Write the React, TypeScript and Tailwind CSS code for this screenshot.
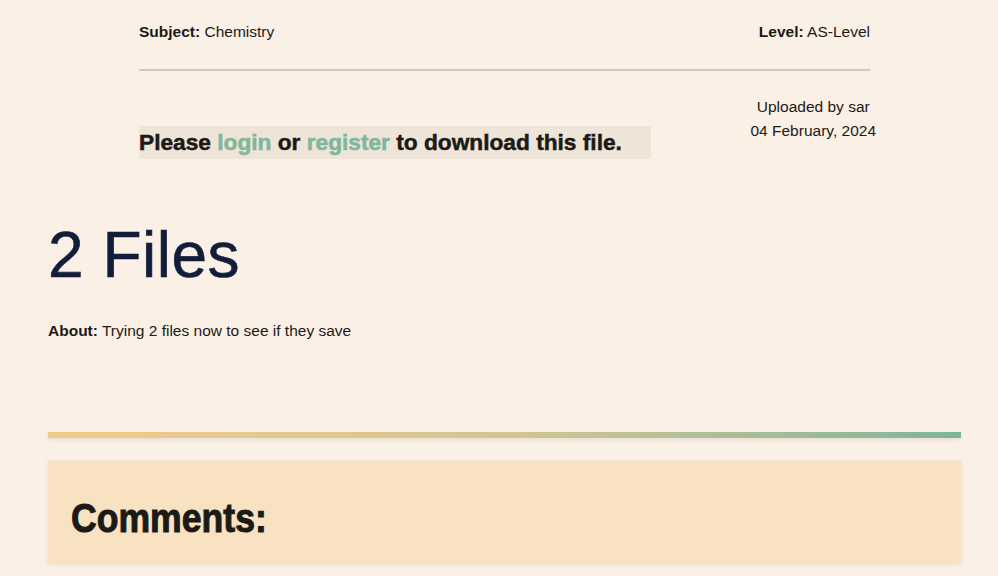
import React from 'react';

const Meta: React.FC<{ label: string; value: string }> = ({ label, value }) => (
  <p className="text-[15.5px] text-[#1c1a17]">
    <span className="font-bold">{label}</span> {value}
  </p>
);

export default function App() {
  return (
    <div className="min-h-[576px] bg-[#faf0e5] text-[#1c1a17] font-['Liberation_Sans',Arial,sans-serif]">
      <div className="w-[913px] ml-[48px]">
        <div className="px-[91px] pt-[20px]">
          <div className="flex justify-between">
            <Meta label="Subject:" value="Chemistry" />
            <Meta label="Level:" value="AS-Level" />
          </div>
          <div className="mt-[26px] h-[2px] bg-[#cfc9c1]" />
          <div className="flex justify-between items-start mt-[24px]">
            <p className="mt-[31px] bg-[#eee4d8] w-[512px] h-[33px] text-[22.7px] leading-[33px] font-bold [-webkit-text-stroke:0.5px_currentColor]">
              Please <a className="text-[#7fb69c]">login</a> or{' '}
              <a className="text-[#7fb69c]">register</a> to download this file.
            </p>
            <div className="text-center text-[15.5px] leading-[24px] mr-[-6px]">
              <p>Uploaded by sar</p>
              <p>04 February, 2024</p>
            </div>
          </div>
        </div>

        <h1 className="mt-[56px] text-[64px] leading-[80px] text-[#131d3b] tracking-[0.5px] [-webkit-text-stroke:0.6px_currentColor]">2 Files</h1>
        <p className="mt-[24px] text-[15.5px]">
          <span className="font-bold">About:</span> Trying 2 files now to see if they save
        </p>

        <div className="mt-[89px] h-[6px] bg-gradient-to-r from-[#f1cb89] via-[#d5c591] to-[#7cb59a] shadow-[0_2px_4px_rgba(0,0,0,0.08)]" />

        <section className="mt-[23px] h-[102px] bg-[#f8e2c2] shadow-[0_1px_4px_rgba(0,0,0,0.1)] px-[23px] pt-[34px]">
          <h2 className="origin-left scale-x-[0.89] text-[40px] leading-[46px] font-bold text-[#1c1a17] [-webkit-text-stroke:1px_currentColor]">
            Comments:
          </h2>
        </section>
      </div>
    </div>
  );
}
